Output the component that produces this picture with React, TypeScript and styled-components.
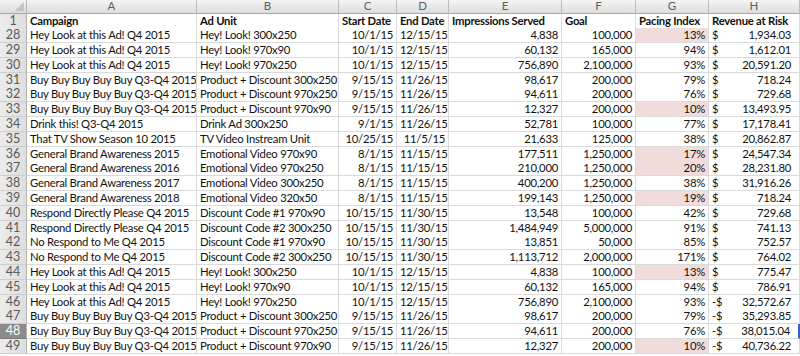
import React from "react";
import styled, { createGlobalStyle, css } from "styled-components";

type Align = "left" | "right" | "center";

interface DataRow {
    n: number;
    campaign: string;
    unit: string;
    start: string;
    end: string;
    served: string;
    goal: string;
    pacing: string;
    risk: string;
    negative?: boolean;
}

const COLUMNS = "27px 170px 142px 58px 52px 113px 74px 73px 91px";

const rows: DataRow[] = [
    { n: 28, campaign: "Hey Look at this Ad! Q4 2015", unit: "Hey! Look! 300x250", start: "10/1/15", end: "12/15/15", served: "4,838", goal: "100,000", pacing: "13%", risk: "1,934.03" },
    { n: 29, campaign: "Hey Look at this Ad! Q4 2015", unit: "Hey! Look! 970x90", start: "10/1/15", end: "12/15/15", served: "60,132", goal: "165,000", pacing: "94%", risk: "1,612.01" },
    { n: 30, campaign: "Hey Look at this Ad! Q4 2015", unit: "Hey! Look! 970x250", start: "10/1/15", end: "12/15/15", served: "756,890", goal: "2,100,000", pacing: "93%", risk: "20,591.20" },
    { n: 31, campaign: "Buy Buy Buy Buy Buy Q3-Q4 2015", unit: "Product + Discount 300x250", start: "9/15/15", end: "11/26/15", served: "98,617", goal: "200,000", pacing: "79%", risk: "718.24" },
    { n: 32, campaign: "Buy Buy Buy Buy Buy Q3-Q4 2015", unit: "Product + Discount 970x250", start: "9/15/15", end: "11/26/15", served: "94,611", goal: "200,000", pacing: "76%", risk: "729.68" },
    { n: 33, campaign: "Buy Buy Buy Buy Buy Q3-Q4 2015", unit: "Product + Discount 970x90", start: "9/15/15", end: "11/26/15", served: "12,327", goal: "200,000", pacing: "10%", risk: "13,493.95" },
    { n: 34, campaign: "Drink this! Q3-Q4 2015", unit: "Drink Ad 300x250", start: "9/1/15", end: "11/26/15", served: "52,781", goal: "100,000", pacing: "77%", risk: "17,178.41" },
    { n: 35, campaign: "That TV Show Season 10 2015", unit: "TV Video Instream Unit", start: "10/25/15", end: "11/5/15", served: "21,633", goal: "125,000", pacing: "38%", risk: "20,862.87" },
    { n: 36, campaign: "General Brand Awareness 2015", unit: "Emotional Video 970x90", start: "8/1/15", end: "11/15/15", served: "177,511", goal: "1,250,000", pacing: "17%", risk: "24,547.34" },
    { n: 37, campaign: "General Brand Awareness 2016", unit: "Emotional Video 970x250", start: "8/1/15", end: "11/15/15", served: "210,000", goal: "1,250,000", pacing: "20%", risk: "28,231.80" },
    { n: 38, campaign: "General Brand Awareness 2017", unit: "Emotional Video 300x250", start: "8/1/15", end: "11/15/15", served: "400,200", goal: "1,250,000", pacing: "38%", risk: "31,916.26" },
    { n: 39, campaign: "General Brand Awareness 2018", unit: "Emotional Video 320x50", start: "8/1/15", end: "11/15/15", served: "199,143", goal: "1,250,000", pacing: "19%", risk: "718.24" },
    { n: 40, campaign: "Respond Directly Please Q4 2015", unit: "Discount Code #1 970x90", start: "10/15/15", end: "11/30/15", served: "13,548", goal: "100,000", pacing: "42%", risk: "729.68" },
    { n: 41, campaign: "Respond Directly Please Q4 2015", unit: "Discount Code #2 300x250", start: "10/15/15", end: "11/30/15", served: "1,484,949", goal: "5,000,000", pacing: "91%", risk: "741.13" },
    { n: 42, campaign: "No Respond to Me Q4 2015", unit: "Discount Code #1 970x90", start: "10/15/15", end: "11/30/15", served: "13,851", goal: "50,000", pacing: "85%", risk: "752.57" },
    { n: 43, campaign: "No Respond to Me Q4 2015", unit: "Discount Code #2 300x250", start: "10/15/15", end: "11/30/15", served: "1,113,712", goal: "2,000,000", pacing: "171%", risk: "764.02" },
    { n: 44, campaign: "Hey Look at this Ad! Q4 2015", unit: "Hey! Look! 300x250", start: "10/1/15", end: "12/15/15", served: "4,838", goal: "100,000", pacing: "13%", risk: "775.47" },
    { n: 45, campaign: "Hey Look at this Ad! Q4 2015", unit: "Hey! Look! 970x90", start: "10/1/15", end: "12/15/15", served: "60,132", goal: "165,000", pacing: "94%", risk: "786.91" },
    { n: 46, campaign: "Hey Look at this Ad! Q4 2015", unit: "Hey! Look! 970x250", start: "10/1/15", end: "12/15/15", served: "756,890", goal: "2,100,000", pacing: "93%", risk: "32,572.67", negative: true },
    { n: 47, campaign: "Buy Buy Buy Buy Buy Q3-Q4 2015", unit: "Product + Discount 300x250", start: "9/15/15", end: "11/26/15", served: "98,617", goal: "200,000", pacing: "79%", risk: "35,293.85", negative: true },
    { n: 48, campaign: "Buy Buy Buy Buy Buy Q3-Q4 2015", unit: "Product + Discount 970x250", start: "9/15/15", end: "11/26/15", served: "94,611", goal: "200,000", pacing: "76%", risk: "38,015.04", negative: true },
    { n: 49, campaign: "Buy Buy Buy Buy Buy Q3-Q4 2015", unit: "Product + Discount 970x90", start: "9/15/15", end: "11/26/15", served: "12,327", goal: "200,000", pacing: "10%", risk: "40,736.22", negative: true },
];

const letters = ["A", "B", "C", "D", "E", "F", "G", "H"];

const SELECTED_ROW = 48;

const isLowPacing = (pacing: string) => parseInt(pacing, 10) < 25;

const App = () => {
    return (
        <>
            <GlobalStyle />
            <Sheet>
                <Row $height={13.5}>
                    <Corner />
                    {letters.map((l) => (
                        <ColHead key={l}>{l}</ColHead>
                    ))}
                </Row>

                <Row>
                    <RowHead>1</RowHead>
                    <Cell $bold>Campaign</Cell>
                    <Cell $bold>Ad Unit</Cell>
                    <Cell $bold>Start Date</Cell>
                    <Cell $bold>End Date</Cell>
                    <Cell $bold>Impressions Served</Cell>
                    <Cell $bold>Goal</Cell>
                    <Cell $bold>Pacing Index</Cell>
                    <Cell $bold>Revenue at Risk</Cell>
                </Row>

                {rows.map((r) => (
                    <Row key={r.n}>
                        <RowHead $selected={r.n === SELECTED_ROW}>{r.n}</RowHead>
                        <Cell>{r.campaign}</Cell>
                        <Cell>{r.unit}</Cell>
                        <Cell $align="right">{r.start}</Cell>
                        <Cell $align="right">{r.end}</Cell>
                        <Cell $align="right">{r.served}</Cell>
                        <Cell $align="right">{r.goal}</Cell>
                        <Cell $align="right" $pink={isLowPacing(r.pacing)}>{r.pacing}</Cell>
                        <Money $active={r.n === SELECTED_ROW}>
                            <span>{r.negative ? "-$" : "$"}</span>
                            <span>{r.risk}</span>
                        </Money>
                    </Row>
                ))}
            </Sheet>
        </>
    );
};

export default App;


const GlobalStyle = createGlobalStyle`
    html, body {
        margin: 0;
        padding: 0;
        background: #ffffff;
        overflow: hidden;
    }

    body {
        font-family: Lato, "Liberation Sans", sans-serif;
    }
`;

const Sheet = styled.div`
    width: 800px;
    height: 356px;
    overflow: hidden;
`;

const Row = styled.div<{ $height?: number }>`
    display: grid;
    grid-template-columns: ${COLUMNS};
    height: ${(p) => p.$height ?? 14.8}px;
`;

const Corner = styled.div`
    position: relative;
    box-sizing: border-box;
    background: linear-gradient(#f3f3f3, #dcdcdc);
    border-right: 1px solid #b8b8b8;
    border-bottom: 1px solid #a8a8a8;

    &::after {
        content: "";
        position: absolute;
        right: 2px;
        bottom: 2px;
        border-left: 9px solid transparent;
        border-bottom: 9px solid #c4c4c4;
    }
`;

const ColHead = styled.div`
    box-sizing: border-box;
    background: linear-gradient(#f4f4f4, #dddddd);
    border-right: 1px solid #bcbcbc;
    border-bottom: 1px solid #a8a8a8;
    color: #5e5e5e;
    font-size: 11.5px;
    line-height: 12.5px;
    text-align: center;
`;

const RowHead = styled.div<{ $selected?: boolean }>`
    box-sizing: border-box;
    background: ${(p) => (p.$selected ? "#8b8b8b" : "linear-gradient(90deg, #ececec, #dedede)")};
    color: ${(p) => (p.$selected ? "#ffffff" : "#5a5a5a")};
    border-right: 1px solid #b3b3b3;
    border-bottom: 1px solid ${(p) => (p.$selected ? "#7a7a7a" : "#cfcfcf")};
    font-size: 12.5px;
    line-height: 14px;
    text-align: center;
`;

const Cell = styled.div<{ $align?: Align; $bold?: boolean; $pink?: boolean; $active?: boolean }>`
    box-sizing: border-box;
    padding: 0 3px;
    border-right: 1px solid #dadada;
    border-bottom: 1px solid #dadada;
    background: ${(p) => (p.$pink ? "#f2dcdb" : "#ffffff")};
    color: #111111;
    font-size: 11.3px;
    letter-spacing: -0.25px;
    line-height: 14px;
    font-weight: ${(p) => (p.$bold ? 700 : 400)};
    text-align: ${(p) => p.$align ?? "left"};
    white-space: nowrap;
    overflow: hidden;

    ${(p) =>
        p.$active &&
        css`
            border-right: 2px solid #2b63d6;
        `}
`;

const Money = styled(Cell)`
    display: flex;
    justify-content: space-between;
    padding: 0 8px 0 3px;
`;
